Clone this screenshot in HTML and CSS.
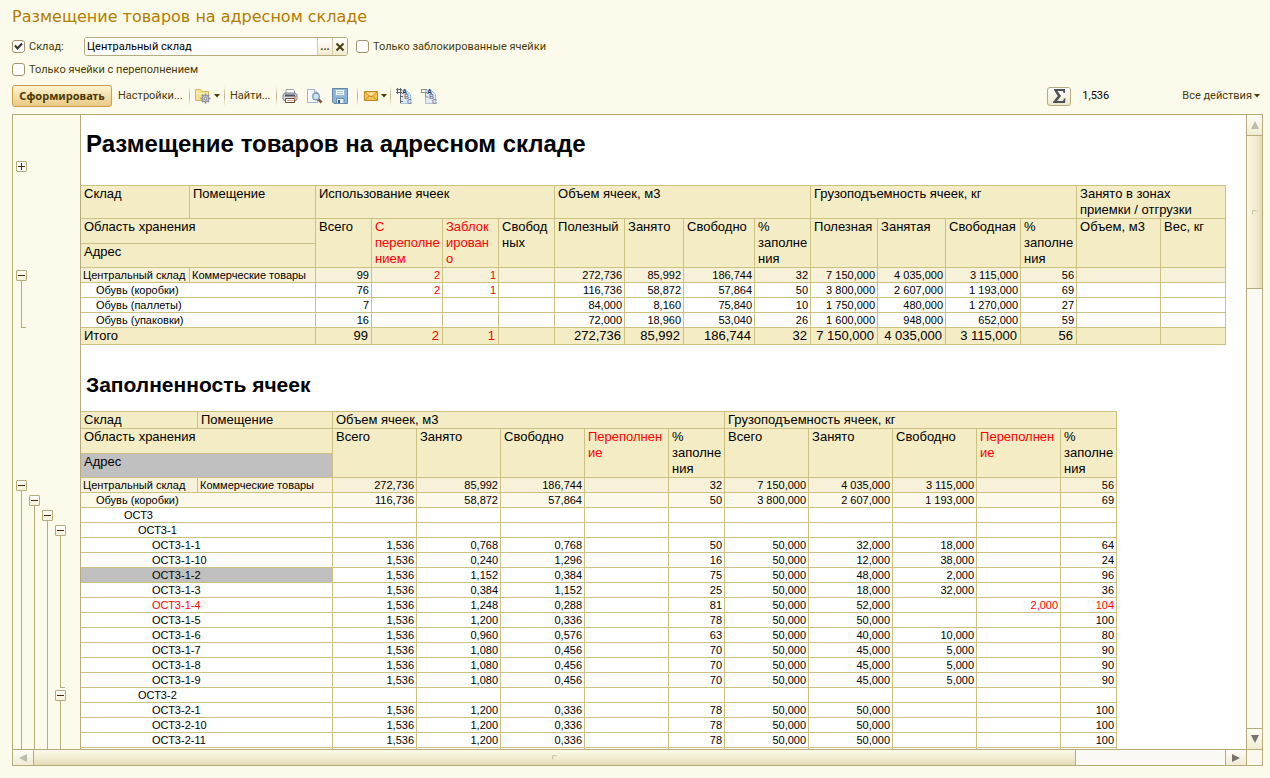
FILE: index.html
```html
<!DOCTYPE html>
<html lang="ru">
<head>
<meta charset="utf-8">
<title>Размещение товаров на адресном складе</title>
<link rel="stylesheet" href="styles.css">
</head>
<body>
<h1 class="page-title">Размещение товаров на адресном складе</h1>

<form class="filters">
  <div class="filter-row">
    <input class="check" type="checkbox" id="use-store" checked>
    <label class="store-label" for="use-store">Склад:</label>
    <div class="combo">
      <input class="combo-text" type="text" value="Центральный склад" aria-label="Склад">
      <button class="combo-btn" type="button" aria-label="Выбрать">...</button>
      <button class="combo-btn" type="button" aria-label="Очистить"><svg width="10" height="10" viewBox="0 0 10 10"><path d="M1.5 1.5L8.500 8.500M8.500 1.500L1.500 8.500" stroke="#4a3c10" stroke-width="2"/></svg></button>
    </div>
    <input class="check" type="checkbox" id="only-blocked">
    <label for="only-blocked">Только заблокированные ячейки</label>
  </div>
  <div class="filter-row">
    <input class="check" type="checkbox" id="only-over">
    <label for="only-over">Только ячейки с переполнением</label>
  </div>
</form>

<div class="toolbar">
  <button class="primary" type="button">Сформировать</button>
  <button class="tool settings" type="button">Настройки...</button>
  <span class="sep"></span>
  <button class="tool drop" type="button" aria-label="Варианты">
    <svg width="17" height="16" viewBox="0 0 17 16"><path d="M.500 12.500V1.500h5l1.500 2h6.500v9z" fill="#f8e18c" stroke="#d8b654"/><path d="M1 5.500h12" stroke="#fff4c0"/><g stroke="#8b929c" stroke-width="2"><path d="M10.500 5.500v10M5.500 10.500h10M7 7l7 7M14 7l-7 7"/></g><circle cx="10.500" cy="10.500" r="3.300" fill="#c3c9d1" stroke="#9097a3"/><circle cx="10.500" cy="10.500" r="1.300" fill="#f5ecc0" stroke="#858c98"/></svg>
    <svg class="arrow" width="6" height="4" viewBox="0 0 6 4"><path d="M0 0h6L3 3.500z" fill="#4a3a08"/></svg>
  </button>
  <span class="sep"></span>
  <button class="tool find" type="button">Найти...</button>
  <span class="sep"></span>
  <button class="tool icon" type="button" aria-label="Печать"><svg width="16" height="16" viewBox="0 0 16 16"><path d="M4 6V1.500h7.500L12.500 3v3" fill="#fff" stroke="#9aa0b4"/><path d="M1 6.500L3 5h10l2 1.500v5L13 13H3l-2-1.500z" fill="#c8cbd3" stroke="#7d8190"/><path d="M3 7.500h10" stroke="#4d5568" stroke-width="2"/><path d="M1.500 10h13" stroke="#f0f1f4"/><path d="M3.500 10.500h9v4h-9z" fill="#fff" stroke="#6f4b38"/><path d="M5 12.500h6" stroke="#c9a28c"/><path d="M12 9h2" stroke="#d95d1e"/></svg></button>
  <button class="tool icon" type="button" aria-label="Предварительный просмотр"><svg width="16" height="16" viewBox="0 0 16 16"><path d="M.500 1.500h7l3 3v10h-10z" fill="#f7fafd" stroke="#9fb3ce"/><path d="M7.500 1.500v3h3" fill="#d8e3f2" stroke="#9fb3ce"/><path d="M11 11l3.500 3.500" stroke="#90502e" stroke-width="2.500"/><circle cx="9" cy="8.500" r="3.300" fill="#c7e4f7" stroke="#7c95b3" stroke-width="1.200"/></svg></button>
  <button class="tool icon" type="button" aria-label="Сохранить"><svg width="16" height="16" viewBox="0 0 16 16"><path d="M.500.500h15v15H2L.500 14z" fill="#8fb3d6" stroke="#5e86ae"/><path d="M3.500 1.500h9v6h-9z" fill="#f4f8fc" stroke="#9dbbd8"/><path d="M5 3.500h6M5 5.500h6" stroke="#abc4da"/><path d="M4.500 10.500h7.500v5H4.500z" fill="#e7eef5" stroke="#6c8fb2"/><path d="M6 12h2v3H6z" fill="#345d87"/></svg></button>
  <span class="sep"></span>
  <button class="tool mail" type="button" aria-label="Отправить">
    <svg width="16" height="16" viewBox="0 0 16 16"><path d="M1.500 3.500h13v9h-13z" fill="#f7c45a" stroke="#c58515"/><path d="M2 4l6 5 6-5M2 12l4.500-4M14 12L9.500 8" fill="none" stroke="#c58a25"/><path d="M3 4.500h10L8 8z" fill="#ffe2a0"/></svg>
    <svg class="arrow" width="6" height="4" viewBox="0 0 6 4"><path d="M0 0h6L3 3.500z" fill="#4a3a08"/></svg>
  </button>
  <span class="sep"></span>
  <button class="tool icon" type="button" aria-label="Развернуть группы"><svg width="17" height="16" viewBox="0 0 17 16"><path d="M4.500 2.500h6l4 4v9h-10z" fill="#dfeaf6" stroke="#a9c1da"/><path d="M0 1.500h6M0 4.500h6M1.500 0v6M4.500 0v15M4 8.500h3M4 13.500h3" fill="none" stroke="#5f6773"/><text x="6" y="6" class="glyph dark">A</text><text x="8" y="11" class="glyph">B</text><text x="11" y="16" class="glyph">C</text></svg></button>
  <button class="tool icon" type="button" aria-label="Свернуть группы"><svg width="17" height="16" viewBox="0 0 17 16"><path d="M4.500 2.500h6l4 4v9h-10z" fill="#dfeaf6" stroke="#a9c1da"/><path d="M0 1.500h6M0 4.500h6M.500 1v4M4.500 5v4h3" fill="none" stroke="#8a909b"/><text x="6" y="6" class="glyph dark">A</text><text x="8" y="11" class="glyph">B</text><text x="11" y="16" class="glyph">C</text></svg></button>
  <div class="toolbar-right">
    <button class="sigma" type="button" aria-label="Сумма"><svg width="13" height="14" viewBox="0 0 13 14"><path d="M1 0h11v4h-1.500L10 2H4.500L8 7l-4 5h6l1-2.500h1.500L12 14H0v-1l4.800-6L1 1z" fill="#4f4f58"/></svg></button>
    <output class="sum">1,536</output>
    <button class="tool all-actions" type="button">Все действия <svg class="arrow" width="6" height="4" viewBox="0 0 6 4"><path d="M0 0h6L3 3.500z" fill="#4a3a08"/></svg></button>
  </div>
</div>

<main class="report">
  <div class="gutter">
    <div class="level level-1">
      <button class="node plus" type="button" aria-label="Развернуть"></button>
      <button class="node summary-node" type="button" aria-label="Свернуть"></button>
      <span class="branch summary-branch"></span>
      <button class="node detail-node" type="button" aria-label="Свернуть"></button>
      <span class="branch open"></span>
    </div>
    <div class="level level-2">
      <button class="node" type="button" aria-label="Свернуть"></button>
      <span class="branch open"></span>
    </div>
    <div class="level level-3">
      <button class="node" type="button" aria-label="Свернуть"></button>
      <span class="branch open"></span>
    </div>
    <div class="level level-4">
      <button class="node" type="button" aria-label="Свернуть"></button>
      <span class="branch section-branch"></span>
      <button class="node section-node" type="button" aria-label="Свернуть"></button>
      <span class="branch open"></span>
    </div>
  </div>

  <div class="sheet">
    <h2 class="sheet-title">Размещение товаров на адресном складе</h2>
    <table class="grid usage">
      <colgroup><col class="w109"><col class="w126"><col class="w56"><col class="w71"><col class="w56"><col class="w56"><col class="w70"><col class="w59"><col class="w71"><col class="w56"><col class="w67"><col class="w68"><col class="w75"><col class="w56"><col class="w84"><col class="w65"></colgroup>
      <thead>
        <tr class="h33"><th>Склад</th><th>Помещение</th><th colspan="4">Использование ячеек</th><th colspan="4">Объем ячеек, м3</th><th colspan="4">Грузоподъемность ячеек, кг</th><th colspan="2">Занято в зонах<br>приемки / отгрузки</th></tr>
        <tr class="h25"><th colspan="2">Область хранения</th><th rowspan="2">Всего</th><th rowspan="2" class="red">С<br>переполне<br>нием</th><th rowspan="2" class="red">Заблок<br>ирован<br>о</th><th rowspan="2">Свобод<br>ных</th><th rowspan="2">Полезный</th><th rowspan="2">Занято</th><th rowspan="2">Свободно</th><th rowspan="2">%<br>заполне<br>ния</th><th rowspan="2">Полезная</th><th rowspan="2">Занятая</th><th rowspan="2">Свободная</th><th rowspan="2">%<br>заполне<br>ния</th><th rowspan="2">Объем, м3</th><th rowspan="2">Вес, кг</th></tr>
        <tr class="h24"><th colspan="2">Адрес</th></tr>
      </thead>
      <tbody>
        <tr class="group"><td class="name">Центральный склад</td><td class="name">Коммерческие товары</td><td>99</td><td class="red">2</td><td class="red">1</td><td></td><td>272,736</td><td>85,992</td><td>186,744</td><td>32</td><td>7 150,000</td><td>4 035,000</td><td>3 115,000</td><td>56</td><td></td><td></td></tr>
        <tr><td class="name in1" colspan="2">Обувь (коробки)</td><td>76</td><td class="red">2</td><td class="red">1</td><td></td><td>116,736</td><td>58,872</td><td>57,864</td><td>50</td><td>3 800,000</td><td>2 607,000</td><td>1 193,000</td><td>69</td><td></td><td></td></tr>
        <tr><td class="name in1" colspan="2">Обувь (паллеты)</td><td>7</td><td></td><td></td><td></td><td>84,000</td><td>8,160</td><td>75,840</td><td>10</td><td>1 750,000</td><td>480,000</td><td>1 270,000</td><td>27</td><td></td><td></td></tr>
        <tr><td class="name in1" colspan="2">Обувь (упаковки)</td><td>16</td><td></td><td></td><td></td><td>72,000</td><td>18,960</td><td>53,040</td><td>26</td><td>1 600,000</td><td>948,000</td><td>652,000</td><td>59</td><td></td><td></td></tr>
      </tbody>
      <tfoot>
        <tr class="total"><td class="name" colspan="2">Итого</td><td>99</td><td class="red">2</td><td class="red">1</td><td></td><td>272,736</td><td>85,992</td><td>186,744</td><td>32</td><td>7 150,000</td><td>4 035,000</td><td>3 115,000</td><td>56</td><td></td><td></td></tr>
      </tfoot>
    </table>

    <h3 class="section-title">Заполненность ячеек</h3>
    <table class="grid filling">
      <colgroup><col class="w117"><col class="w135"><col class="w84"><col class="w84"><col class="w84"><col class="w84"><col class="w56"><col class="w84"><col class="w84"><col class="w84"><col class="w84"><col class="w56"></colgroup>
      <thead>
        <tr class="h17"><th>Склад</th><th>Помещение</th><th colspan="5">Объем ячеек, м3</th><th colspan="5">Грузоподъемность ячеек, кг</th></tr>
        <tr class="h25"><th colspan="2">Область хранения</th><th rowspan="2">Всего</th><th rowspan="2">Занято</th><th rowspan="2">Свободно</th><th rowspan="2" class="red">Переполнен<br>ие</th><th rowspan="2">%<br>заполне<br>ния</th><th rowspan="2">Всего</th><th rowspan="2">Занято</th><th rowspan="2">Свободно</th><th rowspan="2" class="red">Переполнен<br>ие</th><th rowspan="2">%<br>заполне<br>ния</th></tr>
        <tr class="h24"><th colspan="2" class="selected">Адрес</th></tr>
      </thead>
      <tbody>
        <tr class="group"><td class="name">Центральный склад</td><td class="name">Коммерческие товары</td><td>272,736</td><td>85,992</td><td>186,744</td><td></td><td>32</td><td>7 150,000</td><td>4 035,000</td><td>3 115,000</td><td></td><td>56</td></tr>
        <tr class="subgroup"><td class="name in1" colspan="2">Обувь (коробки)</td><td>116,736</td><td>58,872</td><td>57,864</td><td></td><td>50</td><td>3 800,000</td><td>2 607,000</td><td>1 193,000</td><td></td><td>69</td></tr>
        <tr><td class="name in2" colspan="2">ОСТ3</td><td></td><td></td><td></td><td></td><td></td><td></td><td></td><td></td><td></td><td></td></tr>
        <tr><td class="name in3" colspan="2">ОСТ3-1</td><td></td><td></td><td></td><td></td><td></td><td></td><td></td><td></td><td></td><td></td></tr>
        <tr><td class="name in4" colspan="2">ОСТ3-1-1</td><td>1,536</td><td>0,768</td><td>0,768</td><td></td><td>50</td><td>50,000</td><td>32,000</td><td>18,000</td><td></td><td>64</td></tr>
        <tr><td class="name in4" colspan="2">ОСТ3-1-10</td><td>1,536</td><td>0,240</td><td>1,296</td><td></td><td>16</td><td>50,000</td><td>12,000</td><td>38,000</td><td></td><td>24</td></tr>
        <tr><td class="name in4 selected" colspan="2">ОСТ3-1-2</td><td>1,536</td><td>1,152</td><td>0,384</td><td></td><td>75</td><td>50,000</td><td>48,000</td><td>2,000</td><td></td><td>96</td></tr>
        <tr><td class="name in4" colspan="2">ОСТ3-1-3</td><td>1,536</td><td>0,384</td><td>1,152</td><td></td><td>25</td><td>50,000</td><td>18,000</td><td>32,000</td><td></td><td>36</td></tr>
        <tr><td class="name in4 red" colspan="2">ОСТ3-1-4</td><td>1,536</td><td>1,248</td><td>0,288</td><td></td><td>81</td><td>50,000</td><td>52,000</td><td></td><td class="red">2,000</td><td class="red">104</td></tr>
        <tr><td class="name in4" colspan="2">ОСТ3-1-5</td><td>1,536</td><td>1,200</td><td>0,336</td><td></td><td>78</td><td>50,000</td><td>50,000</td><td></td><td></td><td>100</td></tr>
        <tr><td class="name in4" colspan="2">ОСТ3-1-6</td><td>1,536</td><td>0,960</td><td>0,576</td><td></td><td>63</td><td>50,000</td><td>40,000</td><td>10,000</td><td></td><td>80</td></tr>
        <tr><td class="name in4" colspan="2">ОСТ3-1-7</td><td>1,536</td><td>1,080</td><td>0,456</td><td></td><td>70</td><td>50,000</td><td>45,000</td><td>5,000</td><td></td><td>90</td></tr>
        <tr><td class="name in4" colspan="2">ОСТ3-1-8</td><td>1,536</td><td>1,080</td><td>0,456</td><td></td><td>70</td><td>50,000</td><td>45,000</td><td>5,000</td><td></td><td>90</td></tr>
        <tr><td class="name in4" colspan="2">ОСТ3-1-9</td><td>1,536</td><td>1,080</td><td>0,456</td><td></td><td>70</td><td>50,000</td><td>45,000</td><td>5,000</td><td></td><td>90</td></tr>
        <tr><td class="name in3" colspan="2">ОСТ3-2</td><td></td><td></td><td></td><td></td><td></td><td></td><td></td><td></td><td></td><td></td></tr>
        <tr><td class="name in4" colspan="2">ОСТ3-2-1</td><td>1,536</td><td>1,200</td><td>0,336</td><td></td><td>78</td><td>50,000</td><td>50,000</td><td></td><td></td><td>100</td></tr>
        <tr><td class="name in4" colspan="2">ОСТ3-2-10</td><td>1,536</td><td>1,200</td><td>0,336</td><td></td><td>78</td><td>50,000</td><td>50,000</td><td></td><td></td><td>100</td></tr>
        <tr><td class="name in4" colspan="2">ОСТ3-2-11</td><td>1,536</td><td>1,200</td><td>0,336</td><td></td><td>78</td><td>50,000</td><td>50,000</td><td></td><td></td><td>100</td></tr>
        <tr><td class="name" colspan="2"></td><td></td><td></td><td></td><td></td><td></td><td></td><td></td><td></td><td></td><td></td></tr>
      </tbody>
    </table>
  </div>

  <div class="vbar">
    <button class="step" type="button" aria-label="Вверх"><svg width="8" height="8" viewBox="0 0 8 8"><path d="M4 0l4 8H0z" fill="#bdbaae"/></svg></button>
    <div class="thumb"><i class="grip"></i></div>
    <div class="track"></div>
    <button class="step" type="button" aria-label="Вниз"><svg width="8" height="8" viewBox="0 0 8 8"><path d="M0 0h8L4 8z" fill="#77756e"/></svg></button>
  </div>
  <div class="hbar">
    <button class="step" type="button" aria-label="Влево"><svg width="8" height="8" viewBox="0 0 8 8"><path d="M8 0v8L0 4z" fill="#bdbaae"/></svg></button>
    <div class="thumb"><i class="grip"></i></div>
    <div class="track"></div>
    <button class="step" type="button" aria-label="Вправо"><svg width="8" height="8" viewBox="0 0 8 8"><path d="M0 0l8 4-8 4z" fill="#77756e"/></svg></button>
  </div>
  <div class="corner"></div>
</main>
</body>
</html>
```

FILE: styles.css
```css
* { box-sizing: border-box; }

body {
  margin: 0;
  height: 100vh;
  padding: 0 7px 12px 12px;
  display: flex;
  flex-direction: column;
  background: #fcfaeb;
  color: #4a3a08;
  font: 11px/14px Roboto, sans-serif;
}

button, input { font: inherit; color: inherit; margin: 0; }
button { padding: 0; border: 0; background: none; white-space: nowrap; }
svg { display: block; flex: none; }

.page-title {
  margin: 0;
  padding-top: 6px;
  height: 35px;
  font: 16px/22px "DejaVu Sans", sans-serif;
  color: #b37d00;
}

.filter-row { display: flex; align-items: center; height: 23px; white-space: nowrap; }

.check {
  appearance: none;
  flex: none;
  width: 13px;
  height: 13px;
  margin-right: 4px;
  border: 1px solid #a0966a;
  border-radius: 3px;
  background: #fff;
}
.check:checked {
  background: #fff url("data:image/svg+xml,%3Csvg xmlns='http://www.w3.org/2000/svg' viewBox='0 0 11 11'%3E%3Cpath d='M2 4.500l2.500 3L9 2.500' fill='none' stroke='%23333' stroke-width='2'/%3E%3C/svg%3E");
}
.store-label { width: 55px; }

.combo {
  display: flex;
  width: 264px;
  height: 19px;
  margin-right: 8px;
  border: 1px solid #b5ab7b;
  border-radius: 3px;
  background: #fff;
  overflow: hidden;
}
.combo-text { flex: 1; min-width: 0; padding: 0 2px; border: 0; color: #000; background: #fff; outline: 0; }
.combo-btn {
  width: 15px;
  display: flex;
  align-items: center;
  justify-content: center;
  border-left: 1px solid #d5cda6;
  background: linear-gradient(#fff, #f0ebcf);
  color: #4a3c10;
  font-weight: bold;
}

.toolbar { display: flex; align-items: center; height: 33px; padding-bottom: 3px; flex: none; }
.primary {
  width: 100px;
  height: 22px;
  border: 1px solid #c7a04a;
  border-radius: 3px;
  background: linear-gradient(#fdf3d2, #f3dba0 60%, #e9c987);
  font-family: "Noto Sans", sans-serif;
  font-weight: bold;
}
.tool { display: flex; align-items: center; }
.settings { width: 77px; padding-left: 6px; }
.drop { width: 29px; }
.find { width: 46px; }
.mail { width: 27px; }
.icon { width: 25px; }
.arrow { margin-left: 2px; }
.sep { width: 1px; height: 20px; margin-right: 5px; background: linear-gradient(#fcfaeb, #b9b083, #fcfaeb); }
.glyph { font: bold 7px "Liberation Sans", sans-serif; fill: #7b8797; }
.dark { fill: #1d3f6d; }

.toolbar-right { display: flex; align-items: center; margin-left: auto; padding-right: 3px; }
.sigma {
  display: flex;
  align-items: center;
  justify-content: center;
  width: 24px;
  height: 19px;
  border: 1px solid #b5ab7b;
  border-radius: 3px;
  background: linear-gradient(#fff, #ece7cd);
}
.sum { width: 111px; padding-left: 11px; color: #000; }

.report {
  flex: 1;
  min-height: 0;
  display: grid;
  grid-template-columns: 68px minmax(0, 1fr) 16px;
  grid-template-rows: minmax(0, 1fr) 16px;
  border: 1px solid #b5ab7b;
}

.gutter { display: flex; padding-left: 3px; border-right: 1px solid #b5ab7b; overflow: hidden; }
.level { width: 13px; flex: none; display: flex; flex-direction: column; }
.level-1 { padding-top: 46px; }
.level-2 { padding-top: 380px; }
.level-3 { padding-top: 395px; }
.level-4 { padding-top: 410px; }
.node {
  flex: none;
  width: 11px;
  height: 11px;
  border: 1px solid #b5ab7b;
  border-radius: 1px;
  background: linear-gradient(#4a2c00, #4a2c00) center / 7px 1px no-repeat, linear-gradient(#fff, #f6f1da);
}
.plus {
  background: linear-gradient(#4a2c00, #4a2c00) center / 7px 1px no-repeat, linear-gradient(#4a2c00, #4a2c00) center / 1px 7px no-repeat, #fff;
}
.summary-node { margin-top: 98px; }
.detail-node { margin-top: 152px; }
.section-node { margin-top: 2px; }
.branch { flex: none; width: 5px; margin-left: 5px; border-left: 1px solid #b5ab7b; border-bottom: 1px solid #b5ab7b; }
.summary-branch { height: 47px; }
.section-branch { height: 152px; }
.open { flex: 1; border-bottom: 0; }

.sheet { background: #fff; overflow: hidden; color: #000; font-family: "Liberation Sans", Arial, sans-serif; }
.sheet-title { margin: 0; height: 70px; padding: 14px 0 0 5px; font-size: 24px; line-height: 30px; white-space: nowrap; }
.section-title { margin: 0; height: 66px; padding: 27px 0 0 5px; font-size: 21px; line-height: 26px; white-space: nowrap; }

.grid { table-layout: fixed; border-collapse: separate; border-spacing: 0; border-top: 1px solid #ccc083; }
.usage { width: 1145px; }
.filling { width: 1036px; }
.grid th, .grid td { padding: 0 2px; border: 0 solid #ccc083; border-width: 0 1px 1px 0; white-space: nowrap; overflow: hidden; }
.grid th { padding: 0 0 0 3px; background: #f4ecc5; font-size: 13px; line-height: 16px; font-weight: normal; text-align: left; vertical-align: top; }
.grid td { height: 15px; font-size: 11px; line-height: 14px; text-align: right; }
.grid .name { padding-left: 2px; text-align: left; }
.grid .in1 { padding-left: 15px; }
.grid .in2 { padding-left: 43px; }
.grid .in3 { padding-left: 57px; }
.grid .in4 { padding-left: 71px; }
.grid .red { color: #f00; }
.grid .selected { background: #c0c0c0; }
.group { background: #f8f1da; }
.subgroup { background: #fcf8ea; }
.total { background: #f4ecc5; }
.grid .total td { height: 17px; padding: 0 3px; font-size: 13px; line-height: 16px; }
.h33 { height: 33px; }
.h25 { height: 25px; }
.h24 { height: 24px; }
.h17 { height: 17px; }
.w56 { width: 56px; }
.w59 { width: 59px; }
.w65 { width: 65px; }
.w67 { width: 67px; }
.w68 { width: 68px; }
.w70 { width: 70px; }
.w71 { width: 71px; }
.w75 { width: 75px; }
.w84 { width: 84px; }
.w109 { width: 109px; }
.w117 { width: 117px; }
.w126 { width: 126px; }
.w135 { width: 135px; }

.vbar, .hbar { display: flex; }
.vbar { flex-direction: column; border-left: 1px solid #b5ab7b; }
.hbar { grid-column: 1 / 3; border-top: 1px solid #b5ab7b; }
.corner { border-top: 1px solid #b5ab7b; border-left: 1px solid #b5ab7b; background: #faf8ef; }
.step, .thumb { display: flex; align-items: center; justify-content: center; border: 0 solid #b5ab7b; }
.step { flex: none; background: linear-gradient(#fdfcf6, #f0ecd4); }
.track { background: #faf9f3; }
.vbar .step:first-child { height: 21px; border-bottom-width: 1px; }
.vbar .step:last-child { height: 21px; border-top-width: 1px; }
.vbar .thumb { flex: 153; border-bottom-width: 1px; background: linear-gradient(90deg, #faf8ea, #f1ecce 60%, #e3dbb3); }
.vbar .track { flex: 440; }
.hbar .step { width: 21px; }
.hbar .step:first-child { border-right-width: 1px; }
.hbar .step:last-child { border-left-width: 1px; }
.hbar .thumb { flex: 1042; border-right-width: 1px; background: linear-gradient(#faf8ea, #f1ecce 60%, #e3dbb3); }
.hbar .track { flex: 149; }
.grip { width: 5px; height: 5px; border: 1px solid #c9c29c; border-width: 1px 0 0 1px; border-radius: 2px; }
```
